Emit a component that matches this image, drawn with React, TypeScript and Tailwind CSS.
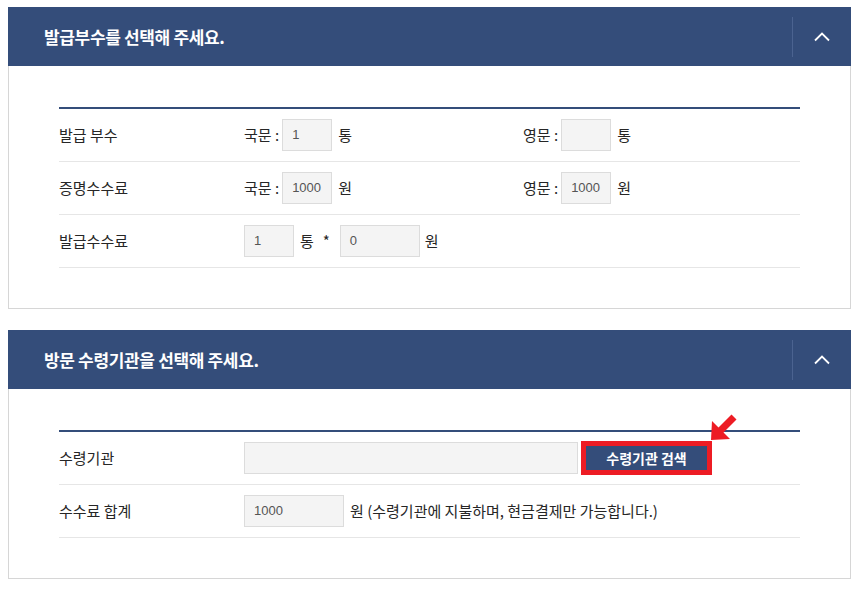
// App.tsx
const KR = "font-['Noto_Sans_CJK_KR','Noto_Sans',sans-serif]";
const NUM = "font-['Liberation_Sans',Arial,sans-serif]";

function Header({ title }: { title: string }) {
  return (
    <div className="flex h-[59px] items-center bg-[#344d7a]">
      <h2 className="flex-1 pl-[36px] text-[17px] font-bold tracking-[-0.02em] text-white">
        {title}
      </h2>
      <div className="h-[40px] w-px bg-[#4b6390]" />
      <button className="flex h-full w-[58px] items-center justify-center">
        <svg width="16" height="10" viewBox="0 0 16 10" fill="none">
          <path d="M1 8.5 L8 1.5 L15 8.5" stroke="#fff" strokeWidth="1.8" />
        </svg>
      </button>
    </div>
  );
}

function Box({ value, w = "w-[50px]" }: { value?: string; w?: string }) {
  return (
    <div
      className={`flex h-[32px] ${w} items-center border border-[#dcdcdc] bg-[#f4f4f4] pl-[9px] text-[13px] text-[#555] ${NUM}`}
    >
      {value}
    </div>
  );
}

function Row({ label, children }: { label: string; children: React.ReactNode }) {
  return (
    <div className="grid h-[53px] grid-cols-[185px_279px_1fr] items-center border-b border-[#e6e6e6]">
      <div className="text-[15px] text-[#262626]">{label}</div>
      {children}
    </div>
  );
}

function Field({ lang, value, unit }: { lang: string; value?: string; unit: string }) {
  return (
    <div className="flex items-center text-[15px] text-[#262626]">
      <span className="mr-[3px]">{lang} :</span>
      <Box value={value} />
      <span className="ml-[6px]">{unit}</span>
    </div>
  );
}

function Panel({ title, children }: { title: string; children: React.ReactNode }) {
  return (
    <section className="w-[843px] border border-t-0 border-[#d6d6d6]">
      <div className="-mx-px">
        <Header title={title} />
      </div>
      <div className="px-[50px] pt-[41px] pb-[40px]">
        <div className="border-t-2 border-[#344d7a]">{children}</div>
      </div>
    </section>
  );
}

export default function App() {
  return (
    <div className={`min-h-[590px] bg-white pl-[8px] pt-[7px] ${KR}`}>
      <Panel title="발급부수를 선택해 주세요.">
        <Row label="발급 부수">
          <Field lang="국문" value="1" unit="통" />
          <Field lang="영문" unit="통" />
        </Row>
        <Row label="증명수수료">
          <Field lang="국문" value="1000" unit="원" />
          <Field lang="영문" value="1000" unit="원" />
        </Row>
        <Row label="발급수수료">
          <div className="col-span-2 flex items-center text-[15px] text-[#262626]">
            <Box value="1" />
            <span className="ml-[6px]">통</span>
            <span className="ml-[9px] mr-[10px]">*</span>
            <Box value="0" w="w-[80px]" />
            <span className="ml-[5px]">원</span>
          </div>
        </Row>
      </Panel>

      <div className="h-[21px]" />

      <Panel title="방문 수령기관을 선택해 주세요.">
        <Row label="수령기관">
          <div className="col-span-2 flex items-center">
            <Box w="w-[334px]" />
            <div className="relative ml-[3px] border-[5px] border-[#ed1c24]">
              <button className="flex h-[24px] w-[121px] items-center justify-center bg-[#344d7a] text-[14px] font-bold text-white">
                수령기관 검색
              </button>
              <svg
                className="absolute left-[125px] top-[-32px]"
                width="27"
                height="27"
                viewBox="0 0 27 27"
              >
                <polygon points="0,26 1,7 19,25" fill="#ed1c24" />
                <polygon points="5.5,15.5 20.5,0.5 25.5,5.5 10.5,20.5" fill="#ed1c24" />
              </svg>
            </div>
          </div>
        </Row>
        <Row label="수수료 합계">
          <div className="col-span-2 flex items-center text-[15px] text-[#262626]">
            <Box value="1000" w="w-[100px]" />
            <span className="ml-[6px]">원 (수령기관에 지불하며, 현금결제만 가능합니다.)</span>
          </div>
        </Row>
      </Panel>
    </div>
  );
}
